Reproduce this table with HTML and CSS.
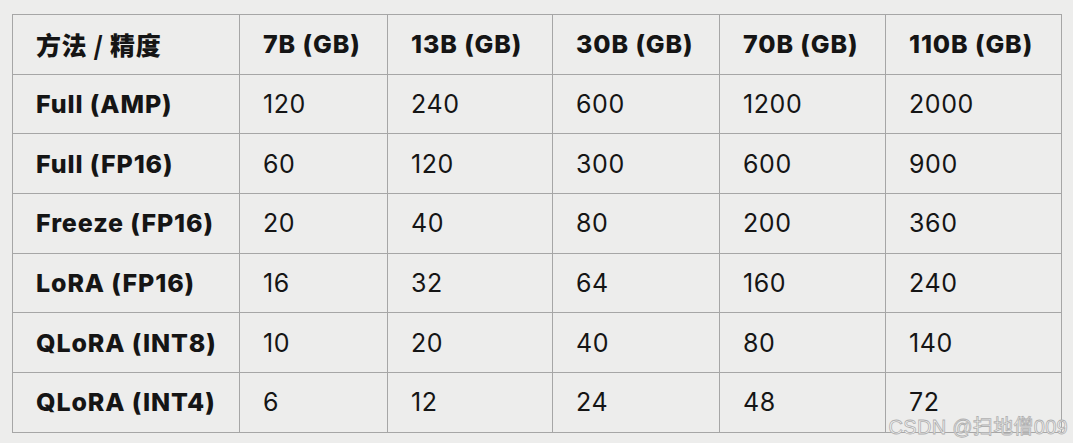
FILE: index.html
```html
<!DOCTYPE html>
<html lang="zh-CN">
<head>
<meta charset="utf-8">
<title>显存需求</title>
<link rel="stylesheet" href="styles.css">
</head>
<body>
<main class="page">
  <table class="mem-table">
    <colgroup>
      <col class="c0"><col class="c1"><col class="c2"><col class="c3"><col class="c4"><col class="c5">
    </colgroup>
    <thead>
      <tr>
        <th>方法 / 精度</th>
        <th>7B (GB)</th>
        <th>13B (GB)</th>
        <th>30B (GB)</th>
        <th>70B (GB)</th>
        <th>110B (GB)</th>
      </tr>
    </thead>
    <tbody>
      <tr><th>Full (AMP)</th><td>120</td><td>240</td><td>600</td><td>1200</td><td>2000</td></tr>
      <tr><th>Full (FP16)</th><td>60</td><td>120</td><td>300</td><td>600</td><td>900</td></tr>
      <tr><th>Freeze (FP16)</th><td>20</td><td>40</td><td>80</td><td>200</td><td>360</td></tr>
      <tr><th>LoRA (FP16)</th><td>16</td><td>32</td><td>64</td><td>160</td><td>240</td></tr>
      <tr><th>QLoRA (INT8)</th><td>10</td><td>20</td><td>40</td><td>80</td><td>140</td></tr>
      <tr><th>QLoRA (INT4)</th><td>6</td><td>12</td><td>24</td><td>48</td><td>72</td></tr>
    </tbody>
  </table>
  <div class="watermark">CSDN @扫地僧009</div>
</main>
</body>
</html>
```
FILE: styles.css
```css
html, body {
  margin: 0;
  padding: 0;
  background: #ededec;
}
body {
  width: 1073px;
  height: 443px;
  overflow: hidden;
  font-family: Inter, "Noto Sans CJK SC", sans-serif;
  color: #151515;
}
.page {
  position: relative;
  padding: 14px 0 0 12px;
  height: 443px;
  box-sizing: border-box;
}
.mem-table {
  border-collapse: collapse;
  table-layout: fixed;
  width: 1049px;
}
.c0 { width: 227px; }
.c1 { width: 148px; }
.c2 { width: 165px; }
.c3 { width: 167px; }
.c4 { width: 166px; }
.c5 { width: 176px; }
.mem-table th,
.mem-table td {
  border: 1px solid #a6a6a6;
  height: 58.7px;
  padding: 0 0 0 23px;
  text-align: left;
  vertical-align: middle;
  font-size: 25px;
  white-space: nowrap;
}
.mem-table th {
  font-weight: 800;
  letter-spacing: 0.9px;
}
.mem-table td {
  font-weight: 400;
  letter-spacing: 0.6px;
}
.mem-table thead th:first-child {
  font-family: "Noto Sans CJK SC", sans-serif;
  font-size: 25px;
  letter-spacing: 0.6px;
}
.watermark {
  position: absolute;
  right: 5px;
  bottom: 6px;
  font-family: "Liberation Sans", "Noto Sans CJK SC", sans-serif;
  font-size: 20px;
  line-height: 20px;
  color: #f6f6f6;
  -webkit-text-stroke: 0.8px #b0b0b0;
  letter-spacing: 0.3px;
}
```
